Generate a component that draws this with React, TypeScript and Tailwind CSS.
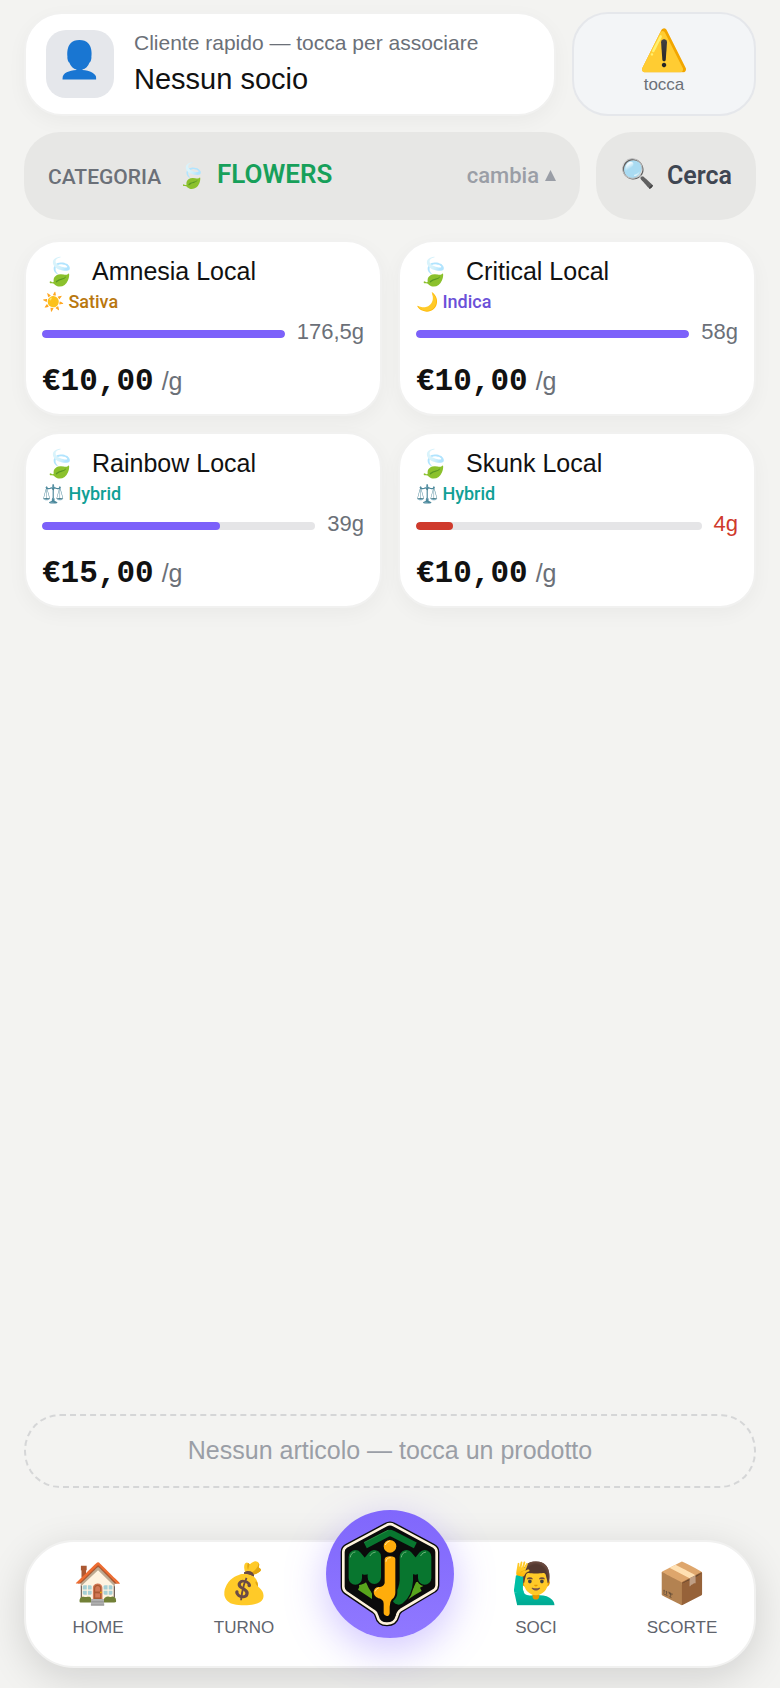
type Tone = 'sativa' | 'indica' | 'hybrid'

type Product = {
  name: string
  tone: Tone
  stock: string
  level: number
  low?: boolean
  price: string
}

const products: Product[] = [
  { name: 'Amnesia Local', tone: 'sativa', stock: '176,5g', level: 100, price: '€10,00' },
  { name: 'Critical Local', tone: 'indica', stock: '58g', level: 100, price: '€10,00' },
  { name: 'Rainbow Local', tone: 'hybrid', stock: '39g', level: 65, price: '€15,00' },
  { name: 'Skunk Local', tone: 'hybrid', stock: '4g', level: 13, low: true, price: '€10,00' },
]

const tones: Record<Tone, { icon: string; label: string; className: string }> = {
  sativa: { icon: '☀️', label: 'Sativa', className: 'text-[#b9770e]' },
  indica: { icon: '🌙', label: 'Indica', className: 'text-[#6b50d8]' },
  hybrid: { icon: '⚖️', label: 'Hybrid', className: 'text-[#10a096]' },
}

const navLeft = [
  { icon: '🏠', label: 'HOME' },
  { icon: '💰', label: 'TURNO' },
]

const navRight = [
  { icon: '🙋‍♂️', label: 'SOCI' },
  { icon: '📦', label: 'SCORTE' },
]

const badgeOutline =
  'M198 76 Q210 69 222 76 L341 140 Q350 145 350 156 V256 Q350 265 343 270 L242 330 Q233 336 231 348 Q225 371 201 371 Q177 371 172 348 Q170 338 162 333 L78 276 Q70 270 70 260 V156 Q70 145 79 140 Z'

function Emoji({ children, className = '' }: { children: string; className?: string }) {
  return (
    <span
      aria-hidden="true"
      className={`inline-block shrink-0 font-['Noto_Color_Emoji',sans-serif] font-normal ${className}`}
    >
      {children}
    </span>
  )
}

function Logo() {
  return (
    <svg viewBox="18 30 384 384" className="size-full" aria-hidden="true">
      <g fill="none" strokeLinejoin="round" strokeLinecap="round">
        <path d={badgeOutline} fill="#0b0b0b" stroke="#0b0b0b" strokeWidth="16" />
        <path d={badgeOutline} stroke="#fff3dc" strokeWidth="8" />
        {/* roof */}
        <path d="M136 136 L203 101 Q210 97 217 101 L286 136" stroke="#08762f" strokeWidth="19" strokeLinecap="butt" />
        <path d="M133 127 L204 91" stroke="#3a9b4f" strokeWidth="2" />
        {/* leaves */}
        <path d="M117 255 Q134 252 138 247 Q146 267 156 280 V297 L114 269 Q120 260 117 255 Z" fill="#58a51c" />
        <path d="M298 244 L288 247 Q283 264 268 281 L262 300 Q284 284 305 273 L300 263 L310 258 Z" fill="#58a51c" />
        {/* letters */}
        <path d="M106 234 V170 L134 204 L163 170 V232" stroke="#0b0b0b" strokeWidth="48" />
        <path d="M106 234 V170 L134 204 L163 170 V232" stroke="#08762f" strokeWidth="40" />
        <path d="M314 234 V170 L287 204 L259 170 V242 Q257 278 236 294" stroke="#0b0b0b" strokeWidth="48" />
        <path d="M314 234 V170 L287 204 L259 170 V242 Q257 278 236 294" stroke="#08762f" strokeWidth="40" />
        <path
          d="M91 171 Q93 157 105 156 M150 167 Q156 156 166 156 M244 171 Q246 157 258 156 M302 167 Q308 156 317 156"
          stroke="#69b477"
          strokeWidth="3"
        />
        <circle cx="210" cy="139" r="22" fill="#ffad0b" stroke="#0b0b0b" strokeWidth="6" />
        <path
          d="M191 177 Q193 166 210 166 Q229 166 229 177 V278 Q229 291 218 300 Q212 307 212 320 V340 Q210 351 200 351 Q190 350 188 340 V311 Q188 300 173 297 Q158 290 158 275 Q160 260 174 258 Q187 260 191 249 Z"
          fill="#ffad0b"
          stroke="#0b0b0b"
          strokeWidth="6"
        />
        <path d="M196 134 Q199 125 208 123 M198 184 Q199 173 211 173 M166 273 Q168 265 175 264" stroke="#ffe29a" strokeWidth="3" />
      </g>
    </svg>
  )
}

function ProductCard({ product }: { product: Product }) {
  const tone = tones[product.tone]

  return (
    <button
      type="button"
      className="flex h-44 flex-col rounded-[36px] border-2 border-[#f1f1f0] bg-white px-4 pt-2 text-left shadow-[0_6px_20px_rgba(0,0,0,0.04)]"
    >
      <span className="flex h-11 items-center gap-[14px]">
        <Emoji className="w-9 text-center text-[27px] leading-9">🍃</Emoji>
        <span className="text-[25px] text-[#111111]">{product.name}</span>
      </span>
      <span className={`flex h-4 items-center gap-1 font-[Roboto,sans-serif] text-lg font-medium ${tone.className}`}>
        <Emoji className="text-lg">{tone.icon}</Emoji>
        {tone.label}
      </span>
      <span className="mt-1 flex h-10 w-full items-center gap-3">
        <span className="h-2 flex-1 overflow-hidden rounded-full bg-[#e5e5e7]">
          <span
            className={`block h-full rounded-full ${product.low ? 'bg-[#cf3a2c]' : 'bg-[#7c61fa]'}`}
            style={{ width: `${product.level}%` }}
          />
        </span>
        <span className={`pb-1.5 text-[22px] ${product.low ? 'text-[#cf3a2c]' : 'text-[#6b7078]'}`}>
          {product.stock}
        </span>
      </span>
      <span className="mt-2 flex items-baseline gap-2">
        <span className="font-['Liberation_Mono',monospace] text-[31px] leading-10 font-bold text-[#111111]">
          {product.price}
        </span>
        <span className="text-[25px] text-[#6b7078]">/g</span>
      </span>
    </button>
  )
}

function NavItem({ icon, label }: { icon: string; label: string }) {
  return (
    <a href="#" className="flex flex-col items-center gap-2 pt-0.5">
      <Emoji className="text-[40px] leading-[48px]">{icon}</Emoji>
      <span className="text-[17px] leading-6 text-[#5f646d]">{label}</span>
    </a>
  )
}

export default function App() {
  return (
    <div className="flex min-h-screen flex-col bg-[#f3f3f1] px-6 pt-3 pb-5 font-['Liberation_Sans',Arial,sans-serif]">
      <header className="flex gap-4">
        <button
          type="button"
          className="flex h-[104px] flex-1 items-center gap-5 rounded-[38px] border-2 border-[#f1f1f0] bg-white px-5 text-left shadow-[0_6px_20px_rgba(0,0,0,0.04)]"
        >
          <span className="flex size-[68px] items-center justify-center rounded-[20px] bg-[#e5e7eb] pb-2">
            <Emoji className="text-4xl">👤</Emoji>
          </span>
          <span className="flex flex-col pb-0.5">
            <span className="text-[21px] leading-8 text-[#6b7078]">Cliente rapido — tocca per associare</span>
            <span className="text-[29px] leading-10 text-[#111111]">Nessun socio</span>
          </span>
        </button>
        <button
          type="button"
          className="flex w-[184px] flex-col items-center justify-center rounded-[36px] border-2 border-[#e5e7eb] bg-[#f3f5f7] pb-1.5"
        >
          <Emoji className="text-[40px] leading-[48px]">⚠️</Emoji>
          <span className="text-[17px] leading-5 text-[#6b7078]">tocca</span>
        </button>
      </header>

      <div className="mt-4 flex gap-4 font-[Roboto,sans-serif]">
        <button type="button" className="flex h-[88px] flex-1 items-center rounded-[36px] bg-[#e7e7e5] px-6">
          <span className="pt-1 text-[21px] font-medium text-[#6b7078]">CATEGORIA</span>
          <Emoji className="ml-4 text-2xl">🍃</Emoji>
          <span className="ml-2.5 pb-1 text-[26px] font-semibold text-[#17a05a]">FLOWERS</span>
          <span className="ml-auto flex items-center gap-1.5 pb-0.5 text-[22px] font-medium text-[#9a9ea6]">
            cambia
            <svg viewBox="0 0 10 10" className="size-[11px]" fill="currentColor" aria-hidden="true">
              <path d="M5 0 10 10H0Z" />
            </svg>
          </span>
        </button>
        <button
          type="button"
          className="flex h-[88px] items-center gap-3 rounded-[36px] bg-[#e7e7e5] px-6 text-[25px] font-semibold text-[#3f4652]"
        >
          <Emoji className="pb-1 text-[28px]">🔍</Emoji>
          Cerca
        </button>
      </div>

      <main className="mt-5 grid flex-1 grid-cols-2 content-start gap-4">
        {products.map((product) => (
          <ProductCard key={product.name} product={product} />
        ))}
      </main>

      <p className="flex h-[74px] items-center justify-center rounded-[36px] border-2 border-dashed border-[#d5d6d7] text-[25px] text-[#9a9ea6]">
        Nessun articolo — tocca un prodotto
      </p>

      <nav className="mt-13 grid h-32 grid-cols-5 gap-0.5 rounded-[50px] border-2 border-[#f1f1f0] bg-white pt-4 shadow-[0_10px_40px_rgba(0,0,0,0.14)]">
        {navLeft.map((item) => (
          <NavItem key={item.label} {...item} />
        ))}
        <a
          href="#"
          aria-label="MJM"
          className="-mt-12 size-32 justify-self-center rounded-full bg-linear-to-b from-[#8067fc] to-[#9078ff] shadow-[0_12px_40px_rgba(124,92,255,0.35)]"
        >
          <Logo />
        </a>
        {navRight.map((item) => (
          <NavItem key={item.label} {...item} />
        ))}
      </nav>
    </div>
  )
}
